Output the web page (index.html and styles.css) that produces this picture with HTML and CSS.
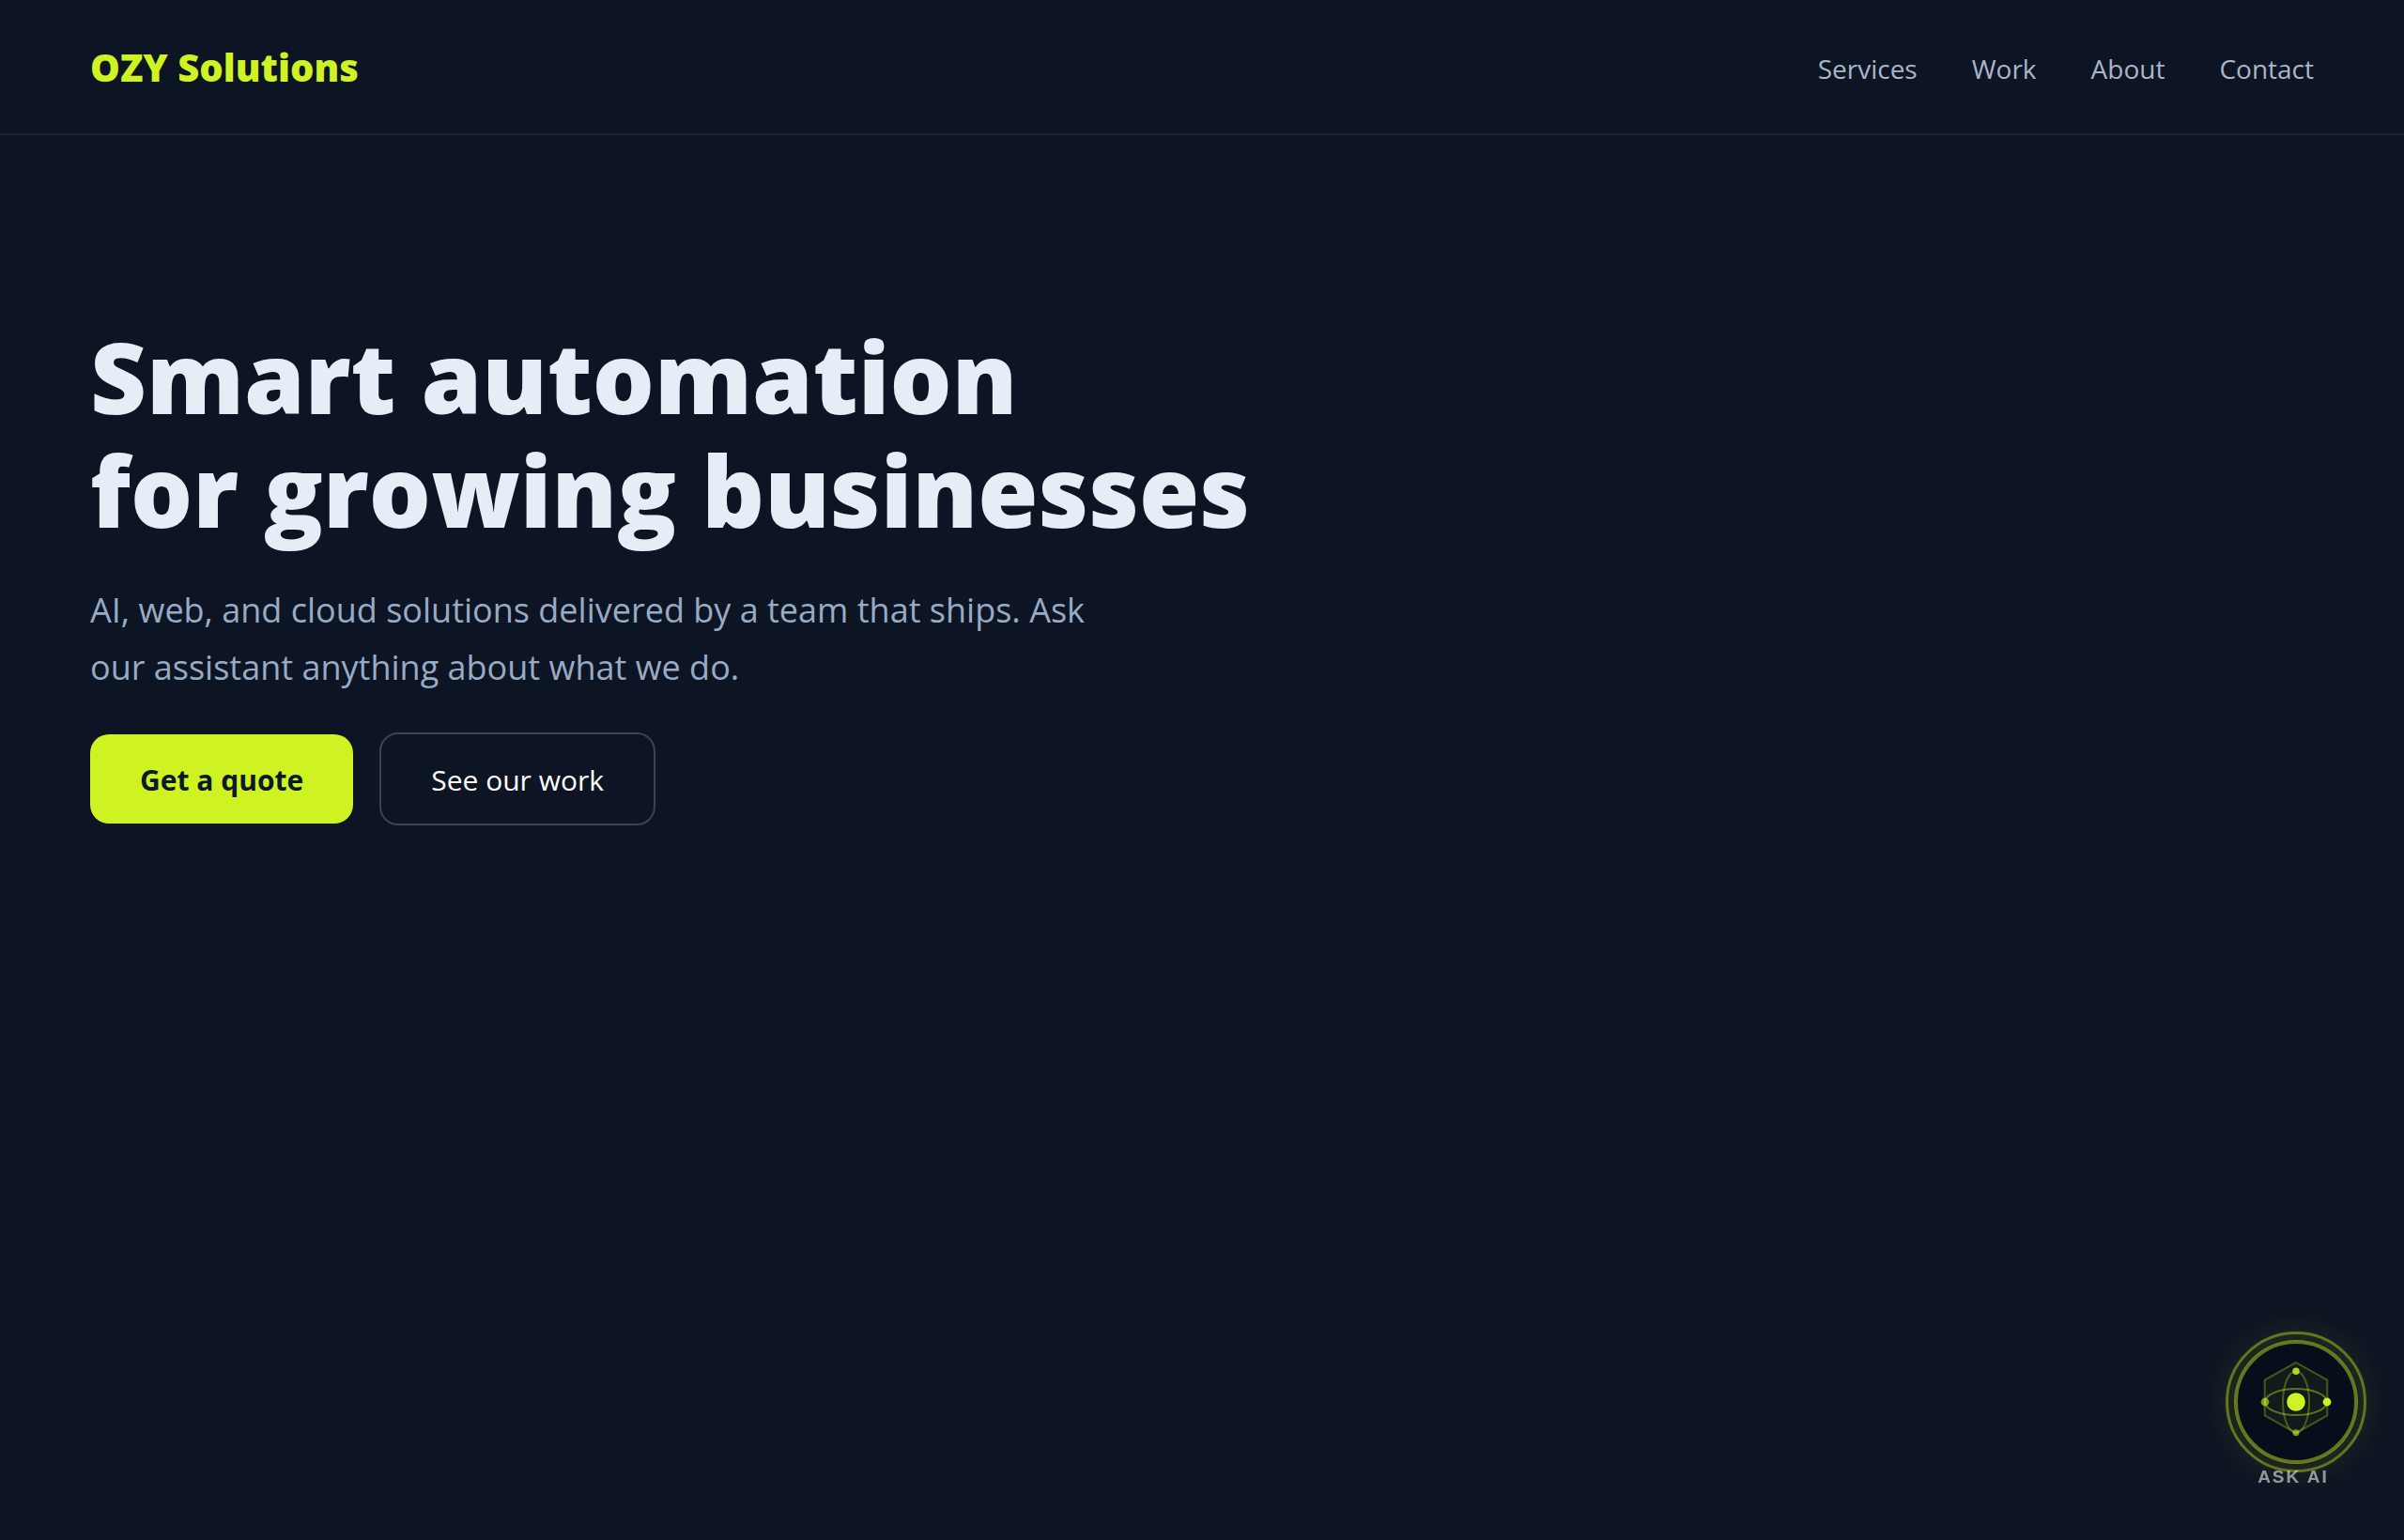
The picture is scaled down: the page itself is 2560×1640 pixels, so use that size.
FILE: index.html
```
<!DOCTYPE html>
<html lang="en">
<head>
  <meta charset="UTF-8">
  <meta name="viewport" content="width=device-width, initial-scale=1.0">
  <title>OZY Solutions</title>
  <link rel="stylesheet" href="styles.css">
</head>
<body>
  <header class="site-header">
    <a class="logo" href="#">OZY Solutions</a>
    <nav class="site-nav">
      <a href="#services">Services</a>
      <a href="#work">Work</a>
      <a href="#about">About</a>
      <a href="#contact">Contact</a>
    </nav>
  </header>

  <main class="hero">
    <h1>Smart automation<br>for growing businesses</h1>
    <p>AI, web, and cloud solutions delivered by a team that ships. Ask our assistant anything about what we do.</p>
    <div class="cta">
      <button class="btn btn-primary" type="button">Get a quote</button>
      <button class="btn btn-outline" type="button">See our work</button>
    </div>
  </main>

  <!-- Chat launcher -->
  <button class="ask-ai" type="button">
    <span class="ask-ring">
      <span class="ask-core">
        <svg class="ask-icon" viewBox="-50 -50 100 100" aria-hidden="true">
          <polygon class="hex" points="0,-42 33.3,-23.3 33.3,14.3 0,33 -33.3,14.3 -33.3,-23.3"/>
          <ellipse class="orbit" rx="33" ry="14"/>
          <ellipse class="orbit orbit-dim" rx="14" ry="32.7"/>
          <circle class="dot" r="9.8"/>
          <circle class="dot" cx="33" cy="0" r="4.4"/>
          <circle class="dot dot-mid" cx="0" cy="-32.7" r="3.7"/>
          <circle class="dot dot-dim" cx="-33" cy="0" r="4.4"/>
          <circle class="dot dot-dim" cx="0" cy="32.7" r="3.5"/>
        </svg>
      </span>
    </span>
    <span class="ask-label">ASK AI</span>
  </button>
</body>
</html>
```

FILE: styles.css
```
* {
  box-sizing: border-box;
}

body {
  margin: 0;
  min-height: 100vh;
  font-family: 'Segoe UI', 'Open Sans', sans-serif;
  background: #0d1423;
  color: #e6edf6;
}

.site-header {
  display: flex;
  justify-content: space-between;
  align-items: center;
  height: 144px;
  padding: 4px 96px 0;
  border-bottom: 2px solid #1b2331;
}

.logo {
  font-size: 40px;
  font-weight: 800;
  line-height: 50px;
  padding-bottom: 2px;
  color: #cff222;
  text-decoration: none;
}

.site-nav {
  display: flex;
  gap: 58px;
}

.site-nav a {
  font-size: 28px;
  color: #a9b6c9;
  text-decoration: none;
}

.hero {
  padding: 196px 96px 0;
}

.hero h1 {
  margin: 0;
  font-size: 104px;
  font-weight: 800;
  line-height: 121px;
}

.hero p {
  max-width: 1120px;
  margin: 37px 0 39px;
  font-size: 36px;
  line-height: 61px;
  color: #98abc4;
}

.cta {
  display: flex;
  align-items: center;
  gap: 28px;
}

.btn {
  padding: 26px 53px 24px;
  border: none;
  border-radius: 20px;
  font-family: inherit;
  font-size: 30px;
  line-height: 45px;
  cursor: pointer;
}

.btn-primary {
  background: #cff222;
  color: #0b1a2b;
  font-weight: 700;
}

.btn-outline {
  border: 2px solid #3d434e;
  background: none;
  color: #fff;
}

.ask-ai {
  position: fixed;
  right: 40px;
  bottom: 56px;
  display: flex;
  flex-direction: column;
  align-items: center;
  padding: 0;
  border: none;
  background: none;
  cursor: pointer;
}

.ask-ring {
  display: flex;
  align-items: center;
  justify-content: center;
  width: 150px;
  height: 150px;
  border: 3px solid #63751f;
  border-radius: 50%;
  background: #1c2420;
  box-shadow: 0 0 36px rgba(207, 242, 34, 0.1);
}

.ask-core {
  display: flex;
  align-items: center;
  justify-content: center;
  width: 130px;
  height: 130px;
  border: 3px solid #63761d;
  border-radius: 50%;
  background: #070e1b;
  box-shadow: 0 0 0 1px #728820;
}

.ask-icon {
  flex-shrink: 0;
  width: 100px;
  height: 100px;
}

.hex {
  fill: rgba(207, 242, 34, 0.06);
  stroke: #cff222;
  stroke-opacity: 0.3;
  stroke-width: 2;
}

.orbit {
  fill: none;
  stroke: #cff222;
  stroke-opacity: 0.4;
  stroke-width: 2;
}

.orbit-dim {
  stroke-opacity: 0.3;
}

.dot {
  fill: #cff222;
}

.dot-mid {
  opacity: 0.85;
}

.dot-dim {
  opacity: 0.6;
}

.ask-label {
  margin-top: -6px;
  padding-right: 6px;
  font-family: 'Liberation Sans', Arial, sans-serif;
  font-size: 19px;
  font-weight: 700;
  line-height: 22px;
  letter-spacing: 2px;
  color: rgba(255, 255, 255, 0.55);
}
```
